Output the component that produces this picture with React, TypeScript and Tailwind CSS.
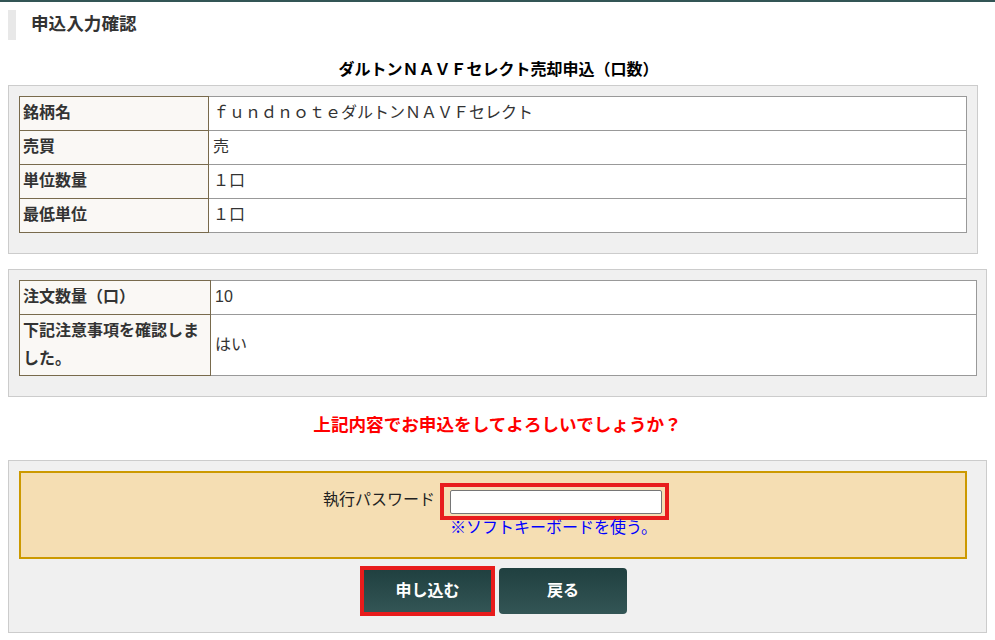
import React from 'react';

const fontStack = "font-['Liberation_Sans','Noto_Sans_CJK_JP',sans-serif]";

interface RowProps {
  label: string;
  value: string;
  labelWidth: string;
  pad?: string;
}

const Row = ({ label, value, labelWidth, pad = 'pt-[1px] pb-[3px]' }: RowProps) => (
  <tr className="h-[34px]">
    <th className={`${labelWidth} ${pad} border border-[#786a4c] bg-[#faf8f5] pl-[3px] pr-0 text-left align-middle font-bold leading-[28px]`}>
      {label}
    </th>
    <td className={`${pad} border border-[#999999] bg-white pl-[4px] align-middle leading-[28px]`}>{value}</td>
  </tr>
);

export default function App() {
  return (
    <div className={`${fontStack} min-h-[640px] bg-white text-[16px] text-[#333333]`}>
      <div className="h-[2px] bg-[#335555]" />

      <div className="px-[8px] pt-[8px]">
        <h1 className="h-[30px] border-l-[8px] border-[#e8e8e8] pl-[15px] text-[17.6px] font-bold leading-[28px]">申込入力確認</h1>

        <h2 className="mt-[17px] h-[28px] pl-[2px] text-center text-[16px] font-bold leading-[26px] text-black">
          ダルトンＮＡＶＦセレクト売却申込（口数）
        </h2>

        <section className="mr-[9px] border border-[#cccccc] bg-[#f0f0f0] pb-[20px] pl-[10px] pr-[10px] pt-[10px]">
          <table className="w-full border-collapse">
            <tbody>
              <Row labelWidth="w-[189px]" label="銘柄名" value="ｆｕｎｄｎｏｔｅダルトンＮＡＶＦセレクト" />
              <Row labelWidth="w-[189px]" label="売買" value="売" />
              <Row labelWidth="w-[189px]" label="単位数量" value="１口" />
              <Row labelWidth="w-[189px]" label="最低単位" value="１口" />
            </tbody>
          </table>
        </section>

        <section className="mt-[15px] border border-[#cccccc] bg-[#f0f0f0] pb-[20px] pl-[10px] pr-[9px] pt-[10px]">
          <table className="w-full border-collapse">
            <tbody>
              <Row labelWidth="w-[191px]" label="注文数量（口）" value="10" />
              <Row labelWidth="w-[191px]" pad="py-[2px]" label="下記注意事項を確認しました。" value="はい" />
            </tbody>
          </table>
        </section>

        <p className="mt-[15px] h-[34px] text-center text-[17.6px] font-bold leading-[26px] text-[#ff0000]">
          上記内容でお申込をしてよろしいでしょうか？
        </p>

        <section className="mt-[14px] h-[173px] border border-[#cccccc] bg-[#f0f0f0] px-[10px] pt-[10px]">
          <div className="mr-[9px] flex h-[88px] justify-center border-2 border-[#cc9900] bg-[#f5deb3] pl-[6px] pt-[10px]">
            <span className="mr-[5px] mt-[5px] leading-[24px] text-[#222222]">執行パスワード</span>
            <div className="flex flex-col">
              <div className="border-[4px] border-[#e81c1c] pb-[2px] pl-[6px] pr-[3px] pt-[3px]">
                <input type="text" className="block h-[24px] w-[212px] rounded-[2px] border border-[#767676] bg-white" />
              </div>
              <a href="#" className="-mt-[4px] pl-[10px] leading-[24px] text-[#0000ff]">※ソフトキーボードを使う。</a>
            </div>
          </div>

          <div className="mt-[7px] flex items-center justify-center gap-[4px] pr-[8px]">
            <button className="h-[50px] w-[135px] border-[4px] border-[#e81c1c] bg-gradient-to-b from-[#204040] to-[#335555] text-[16px] font-bold text-white">
              申し込む
            </button>
            <button className="h-[46px] w-[128px] rounded-[4px] bg-gradient-to-b from-[#204040] to-[#335555] text-[16px] font-bold text-white">
              戻る
            </button>
          </div>
        </section>
      </div>
    </div>
  );
}
